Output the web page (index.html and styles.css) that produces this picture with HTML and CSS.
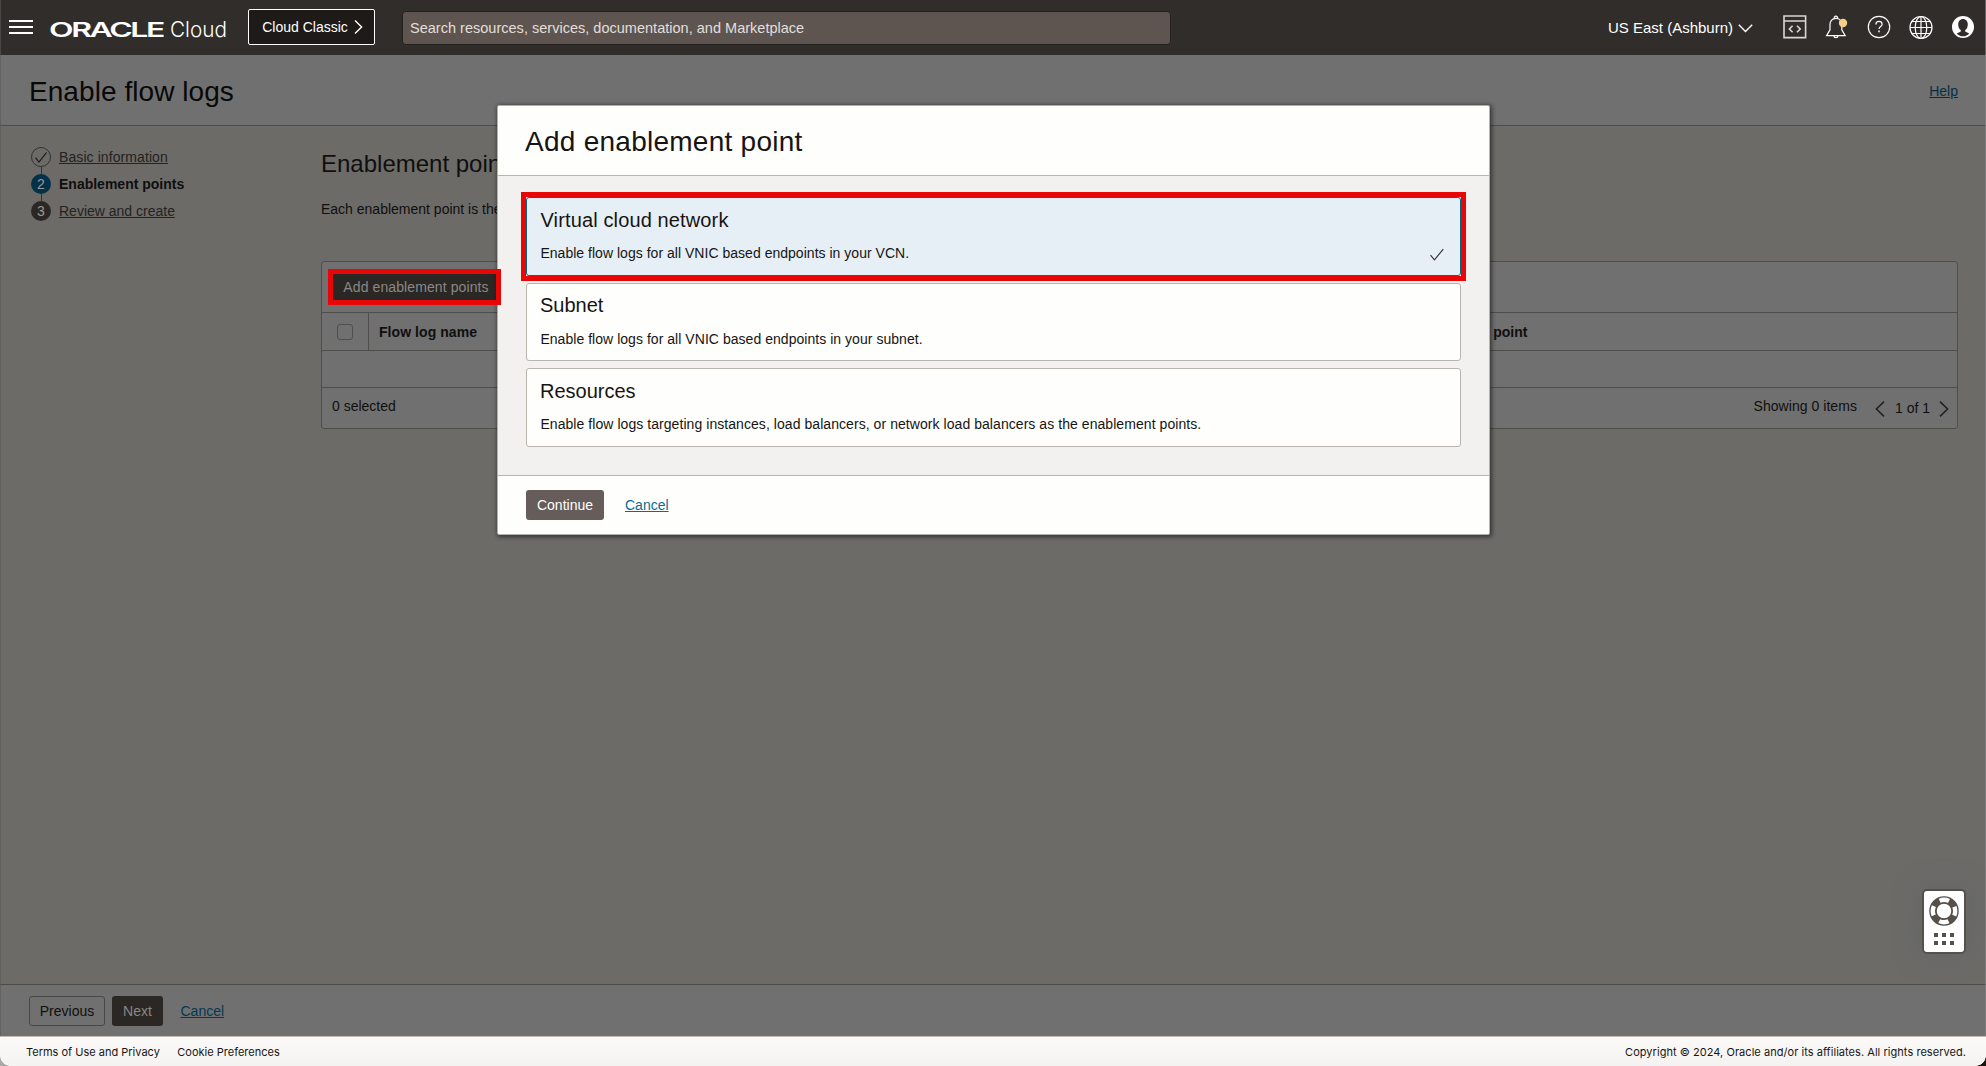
FILE: index.html
```html
<!DOCTYPE html>
<html lang="en">
<head>
<meta charset="utf-8">
<title>Enable flow logs</title>
<link rel="stylesheet" href="styles.css">
</head>
<body>
<div class="app">
  <header class="topbar">
    <svg class="menu-icon" width="24" height="16" viewBox="0 0 24 16"><path d="M0 2h24M0 8h24M0 14h24" stroke="#fff" stroke-width="2"/></svg>
    <svg class="logo" width="180" height="24" viewBox="0 0 180 24">
      <text x="0" y="19.500" class="logo-oracle" textLength="114" lengthAdjust="spacingAndGlyphs">ORACLE</text>
      <text x="121" y="20" class="logo-cloud" textLength="57" lengthAdjust="spacingAndGlyphs">Cloud</text>
    </svg>
    <button class="classic">Cloud Classic<svg width="9" height="14" viewBox="0 0 9 14"><path d="M1 .6l6.600 6.400L1 13.400" fill="none" stroke="#fff" stroke-width="1.400"/></svg></button>
    <div class="search">Search resources, services, documentation, and Marketplace</div>
    <div class="region">US East (Ashburn)<svg width="15" height="9" viewBox="0 0 15 9"><path d="M.8 .8l6.700 6.700L14.200 .8" fill="none" stroke="#fff" stroke-width="1.400"/></svg></div>
    <nav class="tools">
      <svg width="24" height="24" viewBox="0 0 24 24" fill="none" stroke="#dcd6d3" stroke-width="1.600"><path d="M1 1h21.600v21.600H1zM1 6h21.600"/><path d="M9.600 10.800l-3.200 3.200 3.200 3.200M14 10.800l3.200 3.200-3.200 3.200"/></svg>
      <svg width="24" height="24" viewBox="0 0 24 24" fill="none" stroke="#fff" stroke-width="1.200"><path d="M1.600 20.600l3.400-5.800V9.600c0-3.600 2.300-6.200 5.900-6.200s5.900 2.600 5.900 6.200v5.200l3.400 5.800z"/><path d="M9.300 3.400a1.700 1.700 0 1 1 3.200 0M9 20.800a1.900 1.900 0 0 0 3.800 0"/><circle cx="18" cy="8" r="4.200" fill="#f5cf86" stroke="none"/></svg>
      <svg width="24" height="24" viewBox="0 0 24 24" fill="none" stroke="#fff" stroke-width="1.200"><circle cx="12" cy="12" r="10.700"/><path d="M8.900 9.400c0-1.900 1.300-3 3.100-3s3.100 1.100 3.100 2.800c0 2.300-3.100 2.400-3.100 4.900"/><path d="M12 15.600v1.600" stroke-width="1.500"/></svg>
      <svg width="24" height="24" viewBox="0 0 24 24" fill="none" stroke="#fff" stroke-width="1.200"><circle cx="12" cy="12.500" r="11"/><ellipse cx="12" cy="12.500" rx="5.800" ry="11"/><path d="M12 1.500v22M1 12.500h22M3 6.500h18M3 18.500h18"/></svg>
      <svg width="24" height="24" viewBox="0 0 24 24"><circle cx="12" cy="12" r="11" fill="#fff"/><path d="M12 4c2.900 0 4.800 2.300 4.800 5.400 0 2.500-1.100 4.700-2.600 5.600v1.400l4 2c-1.500 1.800-3.700 2.900-6.200 2.900s-4.700-1.100-6.200-2.900l4-2V15c-1.500-.9-2.600-3.100-2.600-5.600C7.200 6.300 9.100 4 12 4z" fill="#312d2a"/></svg>
    </nav>
  </header>

  <div class="titlebar"><h1>Enable flow logs</h1><a class="help">Help</a></div>

  <main class="main">
    <ol class="steps">
      <li><i class="dot done"><svg width="14" height="14" viewBox="0 0 14 14"><path d="M1.500 7.600L5 12 12.500 2.500" fill="none" stroke="#1d1b19" stroke-width="1.200"/></svg></i><a class="step-basic">Basic information</a></li>
      <li><i class="dot current">2</i><b>Enablement points</b></li>
      <li><i class="dot">3</i><a>Review and create</a></li>
    </ol>
    <section class="content">
      <h2>Enablement points</h2>
      <p class="desc">Each enablement point is the resource for which you want to enable flow logs.</p>
      <div class="table">
        <div class="actions"><button class="add">Add enablement points</button></div>
        <div class="thead"><div class="pick"><span class="checkbox"></span></div><b class="col-name">Flow log name</b><b class="col-point">Enablement point</b></div>
        <div class="empty"></div>
        <div class="tfoot"><span class="selected">0 selected</span><span class="showing">Showing 0 items</span>
          <svg width="10" height="16" viewBox="0 0 10 16"><path d="M9 .6L1.400 8 9 15.400" fill="none" stroke="#252220" stroke-width="1.600"/></svg><span class="pages">1 of 1</span><svg width="10" height="16" viewBox="0 0 10 16"><path d="M1 .6L8.600 8 1 15.400" fill="none" stroke="#252220" stroke-width="1.600"/></svg></div>
      </div>
    </section>
  </main>

  <div class="wizard-bar"><button class="prev">Previous</button><button class="next">Next</button><a>Cancel</a></div>
  <footer class="footer"><a>Terms of Use and Privacy</a><a class="cookie">Cookie Preferences</a><span class="copy">Copyright © 2024, Oracle and/or its affiliates. All rights reserved.</span></footer>

  <div class="modal">
    <div class="modal-head"><h2>Add enablement point</h2></div>
    <div class="modal-body">
      <div class="card active"><h3 class="vcn">Virtual cloud network</h3><p>Enable flow logs for all VNIC based endpoints in your VCN.</p><svg class="check" width="16" height="14" viewBox="0 0 16 14"><path d="M1.500 7.200L5.400 11.800 14.300 1.200" fill="none" stroke="#3a3735" stroke-width="1.200"/></svg></div>
      <div class="card short"><h3>Subnet</h3><p>Enable flow logs for all VNIC based endpoints in your subnet.</p></div>
      <div class="card"><h3>Resources</h3><p class="long">Enable flow logs targeting instances, load balancers, or network load balancers as the enablement points.</p></div>
    </div>
    <div class="modal-foot"><button class="continue">Continue</button><a>Cancel</a></div>
  </div>
  <div class="mark mark-add"></div>
  <div class="mark mark-card"></div>
  <div class="support">
    <svg width="32" height="32" viewBox="0 0 32 32" fill="none"><circle cx="16" cy="16" r="11" stroke="#55504c" stroke-width="7.500"/><circle cx="16" cy="16" r="11.200" stroke="#fff" stroke-width="4.400" stroke-dasharray="9.600 8" stroke-dashoffset="4.800"/></svg>
    <svg width="20" height="12" viewBox="0 0 20 12" fill="#55504c"><path d="M0 0h4v4H0zM8 0h4v4H8zM16 0h4v4h-4zM0 8h4v4H0zM8 8h4v4H8zM16 8h4v4h-4z"/></svg>
  </div>
  <i class="corner left"></i><i class="corner right"></i>
</div>
</body>
</html>
```
FILE: styles.css
```css
* { box-sizing: border-box; }
body { margin: 0; background: #6c6b68; font: 14px/20px "Liberation Sans", Arial, sans-serif; color: #100f0e; }
h1, h2, h3, p, ol { margin: 0; padding: 0; font-weight: 400; }
button { font: inherit; padding: 0; margin: 0; border: 0; border-radius: 3px; display: flex; align-items: center; justify-content: center; }
svg { display: block; flex: none; }
.app { position: relative; width: 1986px; height: 1066px; overflow: hidden; display: flex; flex-direction: column; }
.app::after { content: ""; position: absolute; inset: 0 0 30px; border-left: 1px solid rgba(88, 88, 88, .6); border-right: 1px solid rgba(135, 135, 135, .6); pointer-events: none; }

.topbar { height: 55px; flex: none; background: #312d2a; color: #fff; display: flex; align-items: flex-start; padding-left: 9px; white-space: nowrap; }
.menu-icon { margin-top: 19px; }
.logo { margin: 17px 0 0 16px; }
.logo-oracle { font: 600 20px Inter, sans-serif; letter-spacing: -1.500px; fill: #fff; }
.logo-cloud { font: 300 22px Inter, sans-serif; fill: #fff; }
.classic { width: 127px; height: 36px; margin: 9px 0 0 19px; background: #1e1a17; border: 1px solid #fff; border-radius: 2px; color: #fff; gap: 6px; padding-left: 2px; }
.search { width: 769px; height: 34px; margin: 11px 0 0 27px; background: #5f5550; border: 1px solid #25211e; border-radius: 4px; padding: 6px 0 0 7px; color: #e2dedb; font-size: 14.500px; letter-spacing: .015px; }
.region { display: flex; align-items: center; gap: 5px; margin: 18px 0 0 437px; font-size: 15px; }
.tools { display: flex; gap: 18px; margin: 15px 0 0 30px; }

.titlebar { height: 71px; flex: none; background: #707070; border-bottom: 1px solid #504e4b; display: flex; justify-content: space-between; padding: 18px 28px 0 29px; }
h1 { font-size: 28px; line-height: 38px; letter-spacing: .06px; color: #080807; }
.help { margin-top: 8px; color: #042f45; text-decoration: underline; }

.main { flex: 1; display: flex; }
.steps { width: 290px; list-style: none; padding: 21px 0 0 31px; display: flex; flex-direction: column; gap: 7px; }
.steps li { height: 20px; display: flex; align-items: center; gap: 8px; position: relative; }
.steps a { text-decoration: underline; color: #252220; }
.steps .step-basic { letter-spacing: .085px; }
.steps li + li::before { content: ""; position: absolute; left: 10px; top: -7px; width: 1px; height: 7px; background: #35312e; }
.dot { width: 20px; height: 20px; border-radius: 50%; background: #2b2724; color: #9a9896; font-style: normal; display: flex; align-items: center; justify-content: center; }
.dot.current { background: #023149; }
.dot.done { background: none; border: 1px solid #35312e; }
.content { width: 1637px; margin-left: 31px; padding-top: 23px; }
.content h2 { font-size: 24px; line-height: 30px; }
.desc { margin-top: 20px; width: 800px; white-space: nowrap; }
.table { height: 168px; margin-top: 42px; background: #707070; border: 1px solid #504e4b; border-radius: 3px; }
.actions { height: 51px; border-bottom: 1px solid #504e4b; padding: 10px 0 0 10px; }
.add { width: 166px; height: 30px; padding-left: 2px; background: #2b2724; color: #8a8784; border-radius: 0; letter-spacing: .1px; }
.thead { height: 38px; border-bottom: 1px solid #504e4b; display: flex; }
.pick { width: 47px; border-right: 1px solid #504e4b; padding: 11px 0 0 15px; }
.checkbox { display: block; width: 16px; height: 16px; border: 1px solid #504e4b; border-radius: 3px; }
.col-name { width: 1041px; padding: 9px 0 0 10px; letter-spacing: .06px; }
.col-point { padding-top: 9px; }
.empty { height: 37px; border-bottom: 1px solid #504e4b; }
.tfoot { display: flex; align-items: flex-start; padding: 8px 8px 0 10px; }
.tfoot svg { margin-top: 5px; }
.showing { margin-left: auto; margin-right: 18px; letter-spacing: .05px; }
.pages { margin: 2px 9px 0 10px; }

.wizard-bar { height: 53px; flex: none; background: #707070; border-top: 1px solid #4d4a47; border-bottom: 1px solid #bdb9b5; display: flex; padding: 11px 0 0 29px; }
.wizard-bar button { height: 30px; }
.wizard-bar a { margin: 5px 0 0 17.500px; color: #043952; text-decoration: underline; }
.prev { width: 76px; background: none; border: 1px solid #4a4744; color: #100f0e; }
.next { width: 51px; margin-left: 7px; background: #2b2724; color: #8a8784; }
.footer { height: 29px; flex: none; background: linear-gradient(#fcfaf9, #f5f3f2); color: #161513; font: 11px/16px Inter, sans-serif; display: flex; padding: 7px 20px 0 26px; }
.cookie { margin-left: 17.500px; }
.copy { margin-left: auto; letter-spacing: .045px; }

.modal { position: absolute; left: 497px; top: 105px; width: 993px; height: 430px; background: #fefefc; border: 1px solid #b4b0ab; border-radius: 2px; box-shadow: 1px 1px 4px 1px rgba(0, 0, 0, .5); display: flex; flex-direction: column; color: #161513; }
.modal-head { height: 70px; border-bottom: 1px solid #b9b4ae; padding: 18px 0 0 27px; }
.modal-head h2 { font-size: 28px; line-height: 36px; letter-spacing: .26px; }
.modal-body { height: 299px; background: #f3f1f0; padding: 21px 28px 0; display: flex; flex-direction: column; gap: 7px; }
.card { position: relative; height: 79px; background: #fefefc; border: 1px solid #b9b4ae; border-radius: 3px; padding: 9px 13px; flex: none; }
.card.short { height: 78px; padding-top: 8px; }
.card.active { background: #e7eff6; border-color: #0a6280; }
.card h3 { font-size: 20px; line-height: 26px; }
.card .vcn { letter-spacing: .13px; padding-left: .5px; }
.card p { margin-top: 10px; padding-left: .4px; letter-spacing: .025px; }
.card.short p { margin-top: 11px; letter-spacing: .04px; }
.card .long { letter-spacing: .06px; }
.check { position: absolute; right: 15px; bottom: 13px; }
.modal-foot { flex: 1; border-top: 1px solid #b9b4ae; display: flex; padding: 14px 0 0 28px; }
.modal-foot a { margin: 5px 0 0 21px; color: #10698f; text-decoration: underline; }
.continue { width: 78px; height: 30px; background: #665c59; color: #fff; }

.mark { position: absolute; border: 5px solid #e90606; }
.mark-add { left: 328px; top: 269px; width: 173px; height: 36px; }
.mark-card { left: 521px; top: 192px; width: 945px; height: 89px; }
.support { position: absolute; left: 1922px; top: 889px; width: 44px; height: 65px; background: #fff; border: 2px solid #55504c; border-radius: 5px; box-shadow: 0 0 24px 4px rgba(90, 95, 98, .35); display: flex; flex-direction: column; align-items: center; gap: 6px; padding-top: 4px; }
.corner { position: absolute; bottom: 0; width: 10px; height: 10px; }
.corner.left { left: 0; background: radial-gradient(circle at 10px 0, transparent 9.500px, #aaa8a6 10px); }
.corner.right { right: 0; background: radial-gradient(circle at 0 0, transparent 9.500px, #1a120c 10px); }
```
